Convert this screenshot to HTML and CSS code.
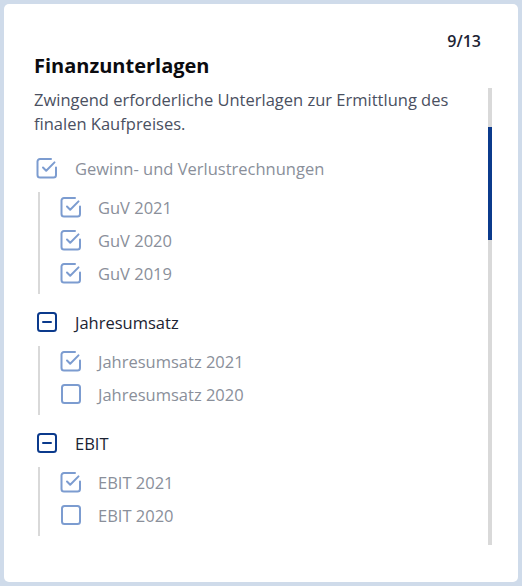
FILE: index.html
```html
<!DOCTYPE html>
<html lang="de">
<head>
<meta charset="utf-8">
<title>Finanzunterlagen</title>
<link rel="stylesheet" href="styles.css">
</head>
<body>
<div class="card">
  <div class="counter">9/13</div>
  <h1 class="title">Finanzunterlagen</h1>
  <div class="body">
    <div class="content">
      <p class="desc">Zwingend erforderliche Unterlagen zur Ermittlung des finalen Kaufpreises.</p>

      <div class="group">
        <div class="row head disabled">
          <svg class="cb cb-light" viewBox="0 0 22 22"><path d="M20 10.5v7.5a2.5 2.5 0 0 1-2.5 2.5h-13.5a2.5 2.5 0 0 1-2.5-2.5v-13.5a2.5 2.5 0 0 1 2.5-2.5h11"/><path d="M7 10.5l3.2 3.2l8.3-8.3"/></svg>
          <span>Gewinn- und Verlustrechnungen</span>
        </div>
        <div class="children">
          <div class="row disabled"><svg class="cb cb-light" viewBox="0 0 22 22"><path d="M20 10.5v7.5a2.5 2.5 0 0 1-2.5 2.5h-13.5a2.5 2.5 0 0 1-2.5-2.5v-13.5a2.5 2.5 0 0 1 2.5-2.5h11"/><path d="M7 10.5l3.2 3.2l8.3-8.3"/></svg><span>GuV 2021</span></div>
          <div class="row disabled"><svg class="cb cb-light" viewBox="0 0 22 22"><path d="M20 10.5v7.5a2.5 2.5 0 0 1-2.5 2.5h-13.5a2.5 2.5 0 0 1-2.5-2.5v-13.5a2.5 2.5 0 0 1 2.5-2.5h11"/><path d="M7 10.5l3.2 3.2l8.3-8.3"/></svg><span>GuV 2020</span></div>
          <div class="row disabled"><svg class="cb cb-light" viewBox="0 0 22 22"><path d="M20 10.5v7.5a2.5 2.5 0 0 1-2.5 2.5h-13.5a2.5 2.5 0 0 1-2.5-2.5v-13.5a2.5 2.5 0 0 1 2.5-2.5h11"/><path d="M7 10.5l3.2 3.2l8.3-8.3"/></svg><span>GuV 2019</span></div>
        </div>
      </div>

      <div class="group">
        <div class="row head">
          <svg class="cb cb-navy" viewBox="0 0 22 22"><rect x="2" y="2" width="18" height="18" rx="2.5"/><path d="M7 11h8"/></svg>
          <span>Jahresumsatz</span>
        </div>
        <div class="children">
          <div class="row disabled"><svg class="cb cb-light" viewBox="0 0 22 22"><path d="M20 10.5v7.5a2.5 2.5 0 0 1-2.5 2.5h-13.5a2.5 2.5 0 0 1-2.5-2.5v-13.5a2.5 2.5 0 0 1 2.5-2.5h11"/><path d="M7 10.5l3.2 3.2l8.3-8.3"/></svg><span>Jahresumsatz 2021</span></div>
          <div class="row disabled"><svg class="cb cb-light" viewBox="0 0 22 22"><rect x="2" y="2" width="18" height="18" rx="2.5"/></svg><span>Jahresumsatz 2020</span></div>
        </div>
      </div>

      <div class="group">
        <div class="row head">
          <svg class="cb cb-navy" viewBox="0 0 22 22"><rect x="2" y="2" width="18" height="18" rx="2.5"/><path d="M7 11h8"/></svg>
          <span>EBIT</span>
        </div>
        <div class="children">
          <div class="row disabled"><svg class="cb cb-light" viewBox="0 0 22 22"><path d="M20 10.5v7.5a2.5 2.5 0 0 1-2.5 2.5h-13.5a2.5 2.5 0 0 1-2.5-2.5v-13.5a2.5 2.5 0 0 1 2.5-2.5h11"/><path d="M7 10.5l3.2 3.2l8.3-8.3"/></svg><span>EBIT 2021</span></div>
          <div class="row disabled"><svg class="cb cb-light" viewBox="0 0 22 22"><rect x="2" y="2" width="18" height="18" rx="2.5"/></svg><span>EBIT 2020</span></div>
        </div>
      </div>
    </div>
    <div class="scrollbar"><div class="thumb"></div></div>
  </div>
</div>
</body>
</html>
```

FILE: styles.css
```css
* { box-sizing: border-box; }
html, body { margin: 0; height: 100%; }
body {
  background: #cfdbea;
  padding: 4px;
  font-family: "Open Sans", "Noto Sans", sans-serif;
}
.card {
  background: #ffffff;
  border-radius: 5px;
  height: 578px;
  padding: 26px 0 0 30px;
  overflow: hidden;
}
.counter {
  text-align: right;
  padding-right: 37px;
  font-size: 16px;
  font-weight: 600;
  line-height: 22px;
  color: #1c2333;
}
.title {
  margin: 0;
  font-size: 20px;
  font-weight: 700;
  line-height: 28px;
  color: #0b0b0f;
}
.body {
  display: flex;
  margin-top: 8px;
}
.content {
  flex: 1;
}
.scrollbar {
  width: 4px;
  height: 457px;
  background: #d9d9d9;
  margin-right: 26px;
  margin-left: 20px;
  padding-top: 39px;
  flex: none;
}
.thumb {
  height: 113px;
  background: #0b3a8c;
}
.desc {
  margin: 0;
  font-size: 16.5px;
  line-height: 24px;
  color: #4a5061;
}
.group { margin-top: 16px; }
.group + .group { margin-top: 12px; }
.row {
  display: flex;
  align-items: center;
  gap: 16px;
  height: 30px;
  font-size: 16.5px;
  font-weight: 500;
  color: #1c2333;
}
.row.head { height: 32px; padding-left: 2px; gap: 17px; }
.row.disabled { color: #8a8f9a; }
.children {
  margin: 8px 0 0 4px;
  border-left: 2px solid #d9d9d9;
  padding: 0 0 6px 20px;
  display: flex;
  flex-direction: column;
  gap: 3px;
}
.cb {
  width: 22px;
  height: 22px;
  flex: none;
  fill: none;
  stroke-width: 2;
  stroke-linecap: round;
  stroke-linejoin: round;
}
.cb-light { stroke: #7c9cd0; }
.cb-navy { stroke: #0b3a8c; }
```
